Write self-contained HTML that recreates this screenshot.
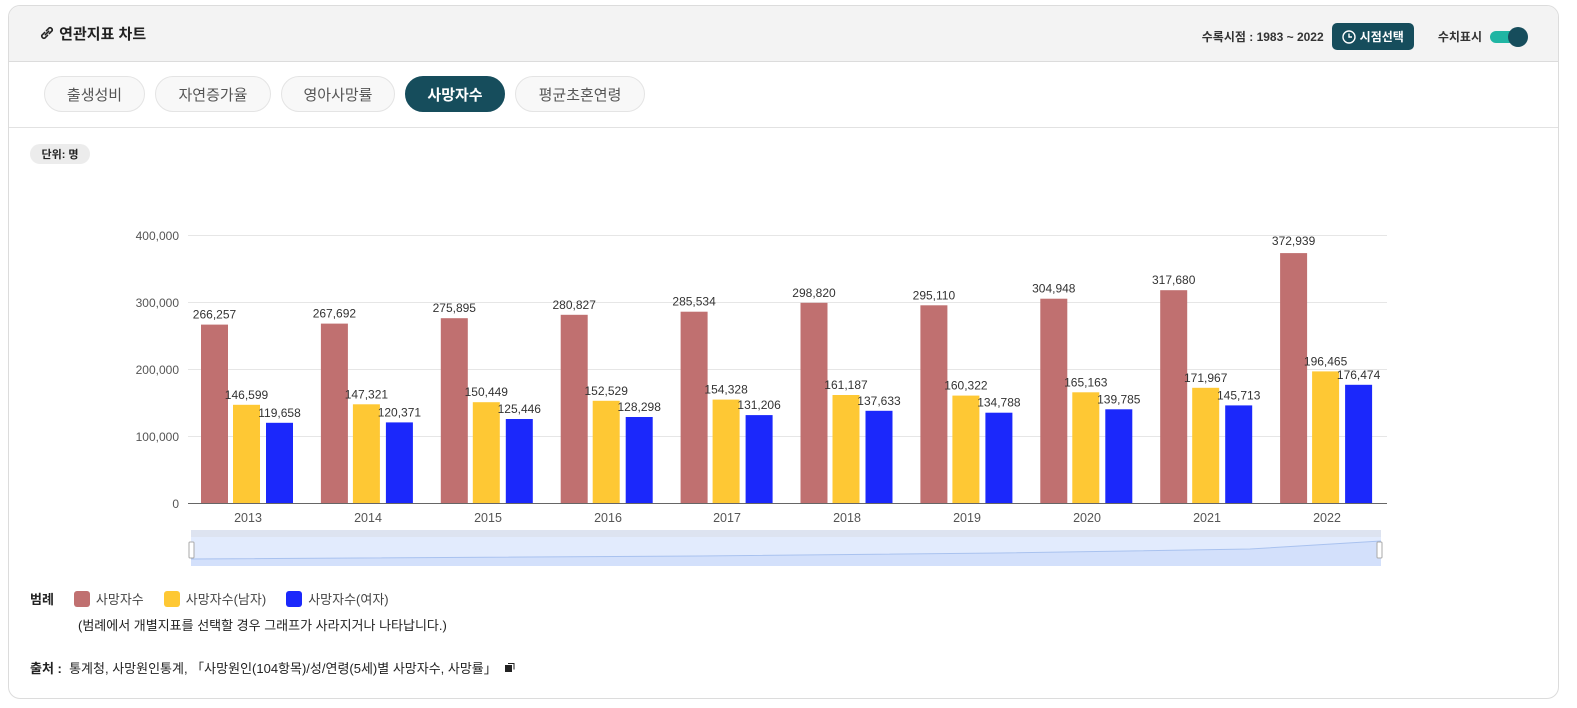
<!DOCTYPE html>
<html><head><meta charset="utf-8"><style>
*{box-sizing:border-box;margin:0;padding:0}
body{width:1577px;height:708px;background:#fff;font-family:"Liberation Sans","Noto Sans CJK KR",sans-serif;color:#222;position:relative;overflow:hidden}
.card{position:absolute;left:8px;top:5px;width:1551px;height:694px;border:1px solid #dcdcdc;border-radius:12px;overflow:hidden;background:#fff}
.hd{height:56px;background:#f3f3f3;border-bottom:1px solid #dcdcdc;position:relative}
.ttl{position:absolute;left:30px;top:17px;font-size:15px;font-weight:bold}
.rt{position:absolute;right:30px;top:17px;display:flex;align-items:center;font-size:12px;font-weight:bold;color:#333}
.btn{background:#164d5c;color:#fff;border-radius:5px;height:27px;padding:0 10px;display:flex;align-items:center;margin:0 24px 0 8px;font-size:12px}
.tog{width:38px;height:20px;position:relative;margin-left:8px}
.tog i{position:absolute;left:0;top:4px;width:30px;height:12px;border-radius:6px;background:#20b5a3}
.tog b{position:absolute;right:0;top:0;width:20px;height:20px;border-radius:50%;background:#164d5c}
.tabs{height:66px;border-bottom:1px solid #e2e2e2;position:relative}
.tab{position:absolute;top:14px;height:36px;border:1px solid #e4e4e4;border-radius:18px;background:#f8f8f8;font-size:15px;color:#555;display:flex;align-items:center;justify-content:center}
.tab.on{background:#164d5c;color:#fff;font-weight:bold;border-color:#164d5c}
.unit{position:absolute;left:30px;top:144px;width:60px;height:20px;border-radius:10px;background:#ececec;font-size:11px;font-weight:bold;display:flex;align-items:center;justify-content:center}
.leg{position:absolute;left:30px;top:589px;font-size:13px;color:#444;display:flex;align-items:center}
.sw{width:16px;height:16px;border-radius:3px;display:inline-block;margin-right:6px}
.note{position:absolute;left:78px;top:615px;font-size:13px;color:#222}
.src{position:absolute;left:30px;top:658px;font-size:13px;color:#222}
</style></head><body>
<div class="card">
<div class="hd">
<div class="ttl"><svg width="16" height="16" viewBox="0 0 14 14" style="vertical-align:-2px"><g fill="none" stroke="#222" stroke-width="1.4" stroke-linecap="round"><path d="M5.5 8.5 L8.5 5.5"/><path d="M5 6.5 L2.5 9 a2 2 0 0 0 2.5 2.5 L7.5 9"/><path d="M9 7.5 L11.5 5 a2 2 0 0 0 -2.5 -2.5 L6.5 5"/></g></svg> 연관지표 차트</div>
<div class="rt">수록시점 : 1983 ~ 2022<div class="btn"><svg width="14" height="14" viewBox="0 0 14 14" style="margin-right:4px"><circle cx="7" cy="7" r="6" fill="none" stroke="#fff" stroke-width="1.4"/><path d="M7 3.5V7h3" fill="none" stroke="#fff" stroke-width="1.4"/></svg>시점선택</div>수치표시<div class="tog"><i></i><b></b></div></div>
</div>
<div class="tabs">
<div class="tab" style="left:35px;width:101px">출생성비</div>
<div class="tab" style="left:146px;width:116px">자연증가율</div>
<div class="tab" style="left:272px;width:114px">영아사망률</div>
<div class="tab on" style="left:396px;width:100px">사망자수</div>
<div class="tab" style="left:506px;width:130px">평균초혼연령</div>
</div>
</div>
<div class="unit">단위: 명</div>
<svg style="position:absolute;left:0;top:0" width="1577" height="708" font-family="Liberation Sans, sans-serif" font-size="12">
<g stroke="#e6e6e6"><line x1="188" x2="1387" y1="235.5" y2="235.5"/><line x1="188" x2="1387" y1="302.5" y2="302.5"/><line x1="188" x2="1387" y1="369.5" y2="369.5"/><line x1="188" x2="1387" y1="436.5" y2="436.5"/></g>
<line x1="188" x2="1387" y1="503.5" y2="503.5" stroke="#666"/>
<g fill="#555" text-anchor="end"><text x="179" y="240">400,000</text><text x="179" y="307">300,000</text><text x="179" y="374">200,000</text><text x="179" y="441">100,000</text><text x="179" y="508">0</text></g>
<g fill="#555" text-anchor="middle" font-size="12.5">
<text x="248" y="522">2013</text><text x="368" y="522">2014</text><text x="488" y="522">2015</text><text x="608" y="522">2016</text><text x="727" y="522">2017</text><text x="847" y="522">2018</text><text x="967" y="522">2019</text><text x="1087" y="522">2020</text><text x="1207" y="522">2021</text><text x="1327" y="522">2022</text></g>
<g id="bars" text-anchor="middle" fill="#333">
<g transform="translate(188,0)"><rect x="13" y="324.6" width="27" height="178.4" fill="#c07070"/><rect x="45" y="404.8" width="27" height="98.2" fill="#fec834"/><rect x="78" y="422.8" width="27" height="80.2" fill="#1b28fb"/><text x="26.5" y="318.6">266,257</text><text x="58.5" y="398.8">146,599</text><text x="91.5" y="416.8">119,658</text></g>
<g transform="translate(307.9,0)"><rect x="13" y="323.6" width="27" height="179.4" fill="#c07070"/><rect x="45" y="404.3" width="27" height="98.7" fill="#fec834"/><rect x="78" y="422.4" width="27" height="80.6" fill="#1b28fb"/><text x="26.5" y="317.6">267,692</text><text x="58.5" y="398.3">147,321</text><text x="91.5" y="416.4">120,371</text></g>
<g transform="translate(427.8,0)"><rect x="13" y="318.2" width="27" height="184.8" fill="#c07070"/><rect x="45" y="402.2" width="27" height="100.8" fill="#fec834"/><rect x="78" y="419" width="27" height="84" fill="#1b28fb"/><text x="26.5" y="312.2">275,895</text><text x="58.5" y="396.2">150,449</text><text x="91.5" y="413">125,446</text></g>
<g transform="translate(547.7,0)"><rect x="13" y="314.8" width="27" height="188.2" fill="#c07070"/><rect x="45" y="400.8" width="27" height="102.2" fill="#fec834"/><rect x="78" y="417" width="27" height="86" fill="#1b28fb"/><text x="26.5" y="308.8">280,827</text><text x="58.5" y="394.8">152,529</text><text x="91.5" y="411">128,298</text></g>
<g transform="translate(667.6,0)"><rect x="13" y="311.7" width="27" height="191.3" fill="#c07070"/><rect x="45" y="399.6" width="27" height="103.4" fill="#fec834"/><rect x="78" y="415.1" width="27" height="87.9" fill="#1b28fb"/><text x="26.5" y="305.7">285,534</text><text x="58.5" y="393.6">154,328</text><text x="91.5" y="409.1">131,206</text></g>
<g transform="translate(787.5,0)"><rect x="13" y="302.8" width="27" height="200.2" fill="#c07070"/><rect x="45" y="395" width="27" height="108" fill="#fec834"/><rect x="78" y="410.8" width="27" height="92.2" fill="#1b28fb"/><text x="26.5" y="296.8">298,820</text><text x="58.5" y="389">161,187</text><text x="91.5" y="404.8">137,633</text></g>
<g transform="translate(907.4,0)"><rect x="13" y="305.3" width="27" height="197.7" fill="#c07070"/><rect x="45" y="395.6" width="27" height="107.4" fill="#fec834"/><rect x="78" y="412.7" width="27" height="90.3" fill="#1b28fb"/><text x="26.5" y="299.3">295,110</text><text x="58.5" y="389.6">160,322</text><text x="91.5" y="406.7">134,788</text></g>
<g transform="translate(1027.3,0)"><rect x="13" y="298.7" width="27" height="204.3" fill="#c07070"/><rect x="45" y="392.3" width="27" height="110.7" fill="#fec834"/><rect x="78" y="409.3" width="27" height="93.7" fill="#1b28fb"/><text x="26.5" y="292.7">304,948</text><text x="58.5" y="386.3">165,163</text><text x="91.5" y="403.3">139,785</text></g>
<g transform="translate(1147.2,0)"><rect x="13" y="290.2" width="27" height="212.8" fill="#c07070"/><rect x="45" y="387.8" width="27" height="115.2" fill="#fec834"/><rect x="78" y="405.4" width="27" height="97.6" fill="#1b28fb"/><text x="26.5" y="284.2">317,680</text><text x="58.5" y="381.8">171,967</text><text x="91.5" y="399.4">145,713</text></g>
<g transform="translate(1267.1,0)"><rect x="13" y="253.1" width="27" height="249.9" fill="#c07070"/><rect x="45" y="371.4" width="27" height="131.6" fill="#fec834"/><rect x="78" y="384.8" width="27" height="118.2" fill="#1b28fb"/><text x="26.5" y="245.1">372,939</text><text x="58.5" y="365.4">196,465</text><text x="91.5" y="378.8">176,474</text></g>
</g>
<rect x="191" y="530" width="1190" height="7" fill="#dde3f0"/>
<rect x="191" y="537" width="1190" height="29" fill="#e2ebfd"/>
<path d="M191 559 L700 556 L1000 553 L1250 549 L1381 541 L1381 566 L191 566Z" fill="#d3e0fb"/>
<path d="M191 559 L700 556 L1000 553 L1250 549 L1381 541" fill="none" stroke="#a9c2ef"/>
<rect x="189" y="542" width="5" height="16" rx="1" fill="#fff" stroke="#aaa"/>
<rect x="1377" y="542" width="5" height="16" rx="1" fill="#fff" stroke="#aaa"/>
</svg>
<div class="leg"><b style="color:#222;margin-right:20px">범례</b><span class="sw" style="background:#c07070"></span>사망자수<span class="sw" style="background:#fec834;margin-left:20px"></span>사망자수(남자)<span class="sw" style="background:#1b28fb;margin-left:20px"></span>사망자수(여자)</div>
<div class="note">(범례에서 개별지표를 선택할 경우 그래프가 사라지거나 나타납니다.)</div>
<div class="src"><b>출처 :</b>&nbsp; 통계청, 사망원인통계, 「사망원인(104항목)/성/연령(5세)별 사망자수, 사망률」 <svg width="12" height="12" viewBox="0 0 12 12" style="vertical-align:-1px;margin-left:4px"><rect x="1" y="3" width="7" height="7" fill="#222"/><path d="M4 1.5h6v6" fill="none" stroke="#222"/></svg></div>
</body></html>
